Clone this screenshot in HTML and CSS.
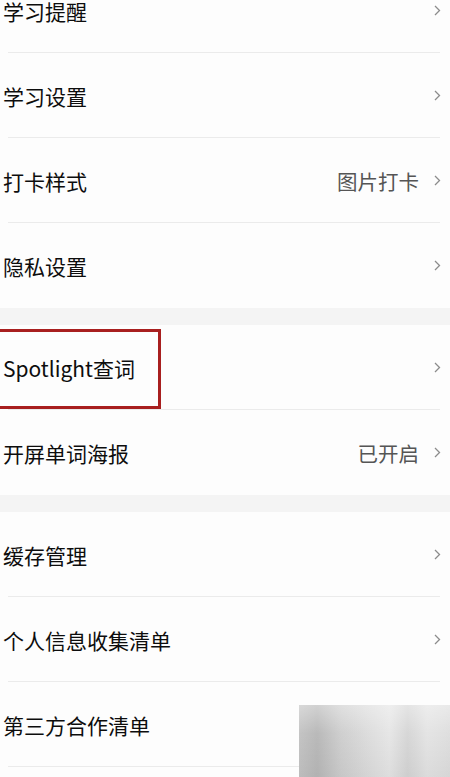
FILE: index.html
```html
<!DOCTYPE html>
<html lang="zh-CN">
<head>
<meta charset="utf-8">
<title>设置</title>
<link rel="stylesheet" href="styles.css">
</head>
<body>
<div class="page">
  <section class="group group-first">
    <div class="row"><span class="label">学习提醒</span><span class="right"><svg class="chev" viewBox="0 0 7 11"><polyline points="1,1 5.5,5.5 1,10"/></svg></span></div>
    <div class="row"><span class="label">学习设置</span><span class="right"><svg class="chev" viewBox="0 0 7 11"><polyline points="1,1 5.5,5.5 1,10"/></svg></span></div>
    <div class="row"><span class="label">打卡样式</span><span class="right"><span class="value">图片打卡</span><svg class="chev" viewBox="0 0 7 11"><polyline points="1,1 5.5,5.5 1,10"/></svg></span></div>
    <div class="row last"><span class="label">隐私设置</span><span class="right"><svg class="chev" viewBox="0 0 7 11"><polyline points="1,1 5.5,5.5 1,10"/></svg></span></div>
  </section>
  <section class="group">
    <div class="row highlight-row"><span class="label">Spotlight查词</span><span class="right"><svg class="chev" viewBox="0 0 7 11"><polyline points="1,1 5.5,5.5 1,10"/></svg></span><div class="mark"></div></div>
    <div class="row last"><span class="label">开屏单词海报</span><span class="right"><span class="value">已开启</span><svg class="chev" viewBox="0 0 7 11"><polyline points="1,1 5.5,5.5 1,10"/></svg></span></div>
  </section>
  <section class="group">
    <div class="row"><span class="label">缓存管理</span><span class="right"><svg class="chev" viewBox="0 0 7 11"><polyline points="1,1 5.5,5.5 1,10"/></svg></span></div>
    <div class="row"><span class="label">个人信息收集清单</span><span class="right"><svg class="chev" viewBox="0 0 7 11"><polyline points="1,1 5.5,5.5 1,10"/></svg></span></div>
    <div class="row"><span class="label">第三方合作清单</span><span class="right"></span></div>
    <div class="row"><span class="label"></span></div>
  </section>
  <div class="watermark"></div>
</div>
</body>
</html>
```
FILE: styles.css
```css
* { box-sizing: border-box; }
html, body {
  margin: 0;
  padding: 0;
  background: #f4f4f4;
  overflow: hidden;
}
.page {
  position: relative;
  width: 450px;
  height: 777px;
  overflow: hidden;
  background: #f4f4f4;
  font-family: "Noto Sans CJK SC", "Noto Sans", sans-serif;
  display: flex;
  flex-direction: column;
  gap: 17px;
}
.group {
  background: #fdfdfd;
  display: flex;
  flex-direction: column;
}
.group-first {
  margin-top: -32px;
}
.row {
  position: relative;
  height: 85px;
  display: flex;
  align-items: center;
  justify-content: space-between;
  padding: 0 9px 0 3px;
  background-image: linear-gradient(#ebebeb, #ebebeb);
  background-repeat: no-repeat;
  background-size: calc(100% - 18px) 1.5px;
  background-position: 8px 100%;
}
.row.last {
  background-image: none;
}
.label {
  font-size: 21px;
  color: #0d0d0d;
  font-weight: 400;
  letter-spacing: 0;
}
.right {
  display: flex;
  align-items: center;
  gap: 15px;
}
.value {
  font-size: 20.5px;
  color: #555555;
}
.chev {
  width: 7px;
  height: 11px;
  fill: none;
  stroke: #8c8c8c;
  stroke-width: 1.3;
}
.mark {
  position: absolute;
  left: -4px;
  top: 4px;
  width: 165px;
  height: 80px;
  border: 3px solid #a81f1f;
}
.watermark {
  position: absolute;
  left: 299px;
  top: 705px;
  width: 151px;
  height: 72px;
  background:
    linear-gradient(180deg, rgba(255,255,255,0.35), rgba(255,255,255,0) 40%, rgba(0,0,0,0.04) 100%),
    linear-gradient(90deg, #c4c4c4 0%, #b9b9b9 12%, #cfcfcf 28%, #dcdcdc 45%, #e6e6e6 60%, #d6d6d6 72%, #e4e4e4 85%, #dedede 100%);
}
```
